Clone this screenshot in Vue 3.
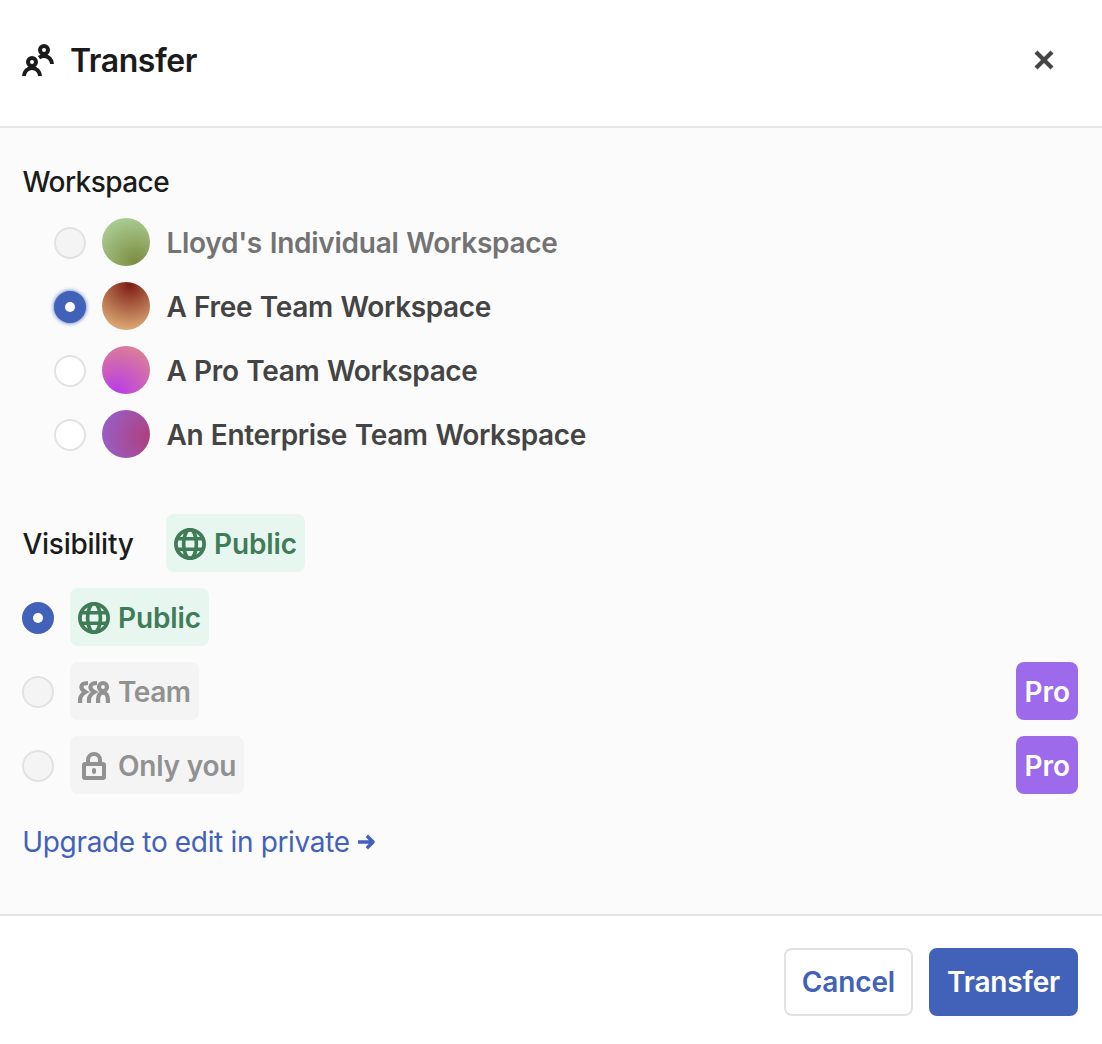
<script setup>
import { ref } from 'vue'

const workspaces = [
  { id: 'individual', name: "Lloyd's Individual Workspace", avatar: 'olive', disabled: true },
  { id: 'free', name: 'A Free Team Workspace', avatar: 'rust' },
  { id: 'pro', name: 'A Pro Team Workspace', avatar: 'pink' },
  { id: 'enterprise', name: 'An Enterprise Team Workspace', avatar: 'plum' },
]
const visibilities = [
  { id: 'public', name: 'Public' },
  { id: 'team', name: 'Team', pro: true },
  { id: 'private', name: 'Only you', pro: true },
]
const workspace = ref('free')
const visibility = ref('public')
</script>

<template>
  <div class="dialog">
    <header class="header">
      <svg class="icon" viewBox="0 0 32 32" fill="none" stroke="currentColor" stroke-width="4">
        <circle cx="10" cy="18" r="4" />
        <path d="M2 32a8 8 0 0 1 16 0" />
        <circle cx="22" cy="6" r="4" />
        <path d="M17 13.6c1.500-1 3.200-1.600 5-1.600a8 8 0 0 1 8 8" />
      </svg>
      <h1 class="title">Transfer</h1>
      <button class="close" aria-label="Close">
        <svg width="20" height="20" viewBox="0 0 20 20" fill="none" stroke="currentColor" stroke-width="4.200">
          <path d="M2 2l16 16M18 2L2 18" />
        </svg>
      </button>
    </header>

    <main class="body">
      <h2 class="label workspace-label">Workspace</h2>
      <ul class="workspaces">
        <li
          v-for="w in workspaces"
          :key="w.id"
          class="workspace"
          :class="{ muted: w.disabled }"
          @click="!w.disabled && (workspace = w.id)"
        >
          <span class="radio" :class="{ checked: workspace === w.id, focused: workspace === w.id, off: w.disabled }"></span>
          <span class="avatar" :class="w.avatar"></span>
          <span class="name">{{ w.name }}</span>
        </li>
      </ul>

      <div class="current">
        <h2 class="label vis-label">Visibility</h2>
        <span class="badge public">
          <svg class="icon" viewBox="0 0 32 32" fill="none" stroke="currentColor">
            <circle cx="16" cy="16" r="14.100" stroke-width="3.800" />
            <ellipse cx="16" cy="16" rx="6.400" ry="14.500" stroke-width="3.700" />
            <path d="M2 10.800h28M2 21.200h28" stroke-width="3.600" />
          </svg>
          <span>Public</span>
        </span>
      </div>

      <ul class="visibilities">
        <li v-for="v in visibilities" :key="v.id" class="visibility">
          <span class="radio" :class="{ checked: visibility === v.id, off: v.pro }"></span>
          <span class="badge" :class="v.id">
            <svg class="icon" viewBox="0 0 32 32" fill="none" stroke="currentColor">
              <template v-if="v.id === 'public'">
                <circle cx="16" cy="16" r="14.100" stroke-width="3.800" />
                <ellipse cx="16" cy="16" rx="6.400" ry="14.500" stroke-width="3.700" />
                <path d="M2 10.800h28M2 21.200h28" stroke-width="3.600" />
              </template>
              <g v-else-if="v.id === 'team'" stroke-width="4.200">
                <path d="M10 7C6 7 3.400 8.300 3.400 11C3.400 13.500 5 14.600 7.500 16C4 18 2.100 20 2.100 23.500V27" />
                <path d="M19 7C15 7 12.400 8.300 12.400 11C12.400 13.500 14 14.600 16.500 16C13 18 11 20 11 23.500V27" />
                <circle cx="25" cy="11" r="4" />
                <path d="M20.100 27v-3.500c0-4 2-6.800 4.900-6.800s4.900 2.800 4.900 6.800V27" />
              </g>
              <g v-else stroke-width="4">
                <rect x="6" y="14" width="20" height="14" rx="1" />
                <path d="M10 14v-4a6 6 0 0 1 12 0v4" />
                <rect x="14" y="18" width="4" height="6" rx="2" fill="currentColor" stroke="none" />
              </g>
            </svg>
            <span>{{ v.name }}</span>
          </span>
          <span v-if="v.pro" class="badge plan"><span>Pro</span></span>
        </li>
      </ul>

      <a class="upgrade">
        <span>Upgrade to edit in private</span>
        <svg width="18" height="16" viewBox="0 0 18 16" fill="none" stroke="currentColor" stroke-width="3.400">
          <path d="M0 8h15M8.800 1.700l6.300 6.300l-6.300 6.300" stroke-linejoin="round" />
        </svg>
      </a>
    </main>

    <footer class="footer">
      <button class="btn cancel"><span>Cancel</span></button>
      <button class="btn primary"><span>Transfer</span></button>
    </footer>
  </div>
</template>

<style>
body {
  margin: 0;
  background: #fff;
}
</style>

<style scoped>
.dialog {
  box-sizing: border-box;
  width: 1102px;
  height: 1044px;
  display: flex;
  flex-direction: column;
  background: #fff;
  color: #1b1b1b;
  font-family: Inter, "Liberation Sans", sans-serif;
  font-size: 28px;
  line-height: 42px;
  white-space: nowrap;
}
.header {
  box-sizing: border-box;
  height: 128px;
  display: flex;
  align-items: center;
  padding: 0 46px 6px 22px;
  border-bottom: 2px solid #e5e5e5;
}
.icon {
  width: 32px;
  height: 32px;
  flex: none;
}
.title {
  margin: 2px 0 0 16px;
  font-size: 32px;
  font-weight: 600;
  letter-spacing: -0.45px;
}
button {
  font: inherit;
  padding: 0;
  border: 0;
  background: none;
}
.close {
  display: flex;
  margin-left: auto;
  padding: 2px;
  color: #444;
}
.body {
  box-sizing: border-box;
  height: 786px;
  padding: 33px 24px 0 22px;
  background: #fbfbfb;
}
.label {
  margin: 0;
  font-size: 28px;
  font-weight: 500;
}
.workspace-label {
  padding-left: 0.4px;
  letter-spacing: -0.55px;
}
ul {
  margin: 0;
  padding: 0;
  list-style: none;
}
.workspaces {
  display: flex;
  flex-direction: column;
  gap: 16px;
  padding: 15px 0 0 32px;
}
.workspace {
  height: 48px;
  display: flex;
  align-items: center;
  gap: 16px;
  color: #444;
  font-weight: 600;
  letter-spacing: -0.36px;
  word-spacing: 1px;
}
.workspace .radio {
  margin-top: 2px;
}
.workspace .name {
  margin: 2px 0 0 0.4px;
}
.workspace.muted {
  color: #737373;
  letter-spacing: -0.27px;
}
.radio {
  box-sizing: border-box;
  width: 32px;
  height: 32px;
  flex: none;
  display: flex;
  align-items: center;
  justify-content: center;
  border: 2px solid #e2e2e2;
  border-radius: 50%;
  background: #fff;
}
.radio.off {
  background: #f4f4f4;
}
.radio.checked {
  border-color: #4262ba;
  background: #4262ba;
}
.radio.checked::after {
  content: "";
  width: 10px;
  height: 10px;
  border-radius: 50%;
  background: #fff;
}
.radio.focused {
  box-shadow: 0 0 4px #4262ba;
}
.avatar {
  width: 48px;
  height: 48px;
  border-radius: 50%;
}
.olive {
  background: radial-gradient(circle at 70% 92%, #7c8c40, #afd49c 92%);
}
.rust {
  background: radial-gradient(circle at 58% 5%, #7d1d14, #dfae78 88%);
}
.pink {
  background: radial-gradient(circle at 32% 95%, #b83de6, #df8490 92%);
}
.plum {
  background: radial-gradient(circle at 98% 58%, #b03e7e, #9661c8 92%);
}
.current {
  display: flex;
  align-items: center;
  margin-top: 56px;
}
.vis-label {
  box-sizing: border-box;
  width: 144px;
  padding-left: 0.4px;
  margin-top: 2px;
  letter-spacing: -0.25px;
}
.badge {
  box-sizing: border-box;
  height: 58px;
  display: flex;
  align-items: center;
  gap: 8px;
  padding: 2px 8px 0;
  border-radius: 8px;
  background: #f4f4f4;
  color: #919191;
  font-weight: 600;
  letter-spacing: -0.22px;
}
.public {
  background: #e7f6ef;
  color: #407c58;
  letter-spacing: -0.12px;
}
.team {
  letter-spacing: -0.45px;
}
.plan {
  margin-left: auto;
  background: #9c6aea;
  color: #fff;
  letter-spacing: 0;
}
.visibilities {
  display: flex;
  flex-direction: column;
  gap: 16px;
  margin-top: 16px;
}
.visibility {
  display: flex;
  align-items: center;
}
.visibility .radio {
  margin: 2px 16px 0 0;
}
.upgrade {
  display: flex;
  align-items: center;
  gap: 8px;
  margin-top: 27px;
  padding-left: 0.3px;
  color: #4262ba;
  letter-spacing: -0.34px;
}
.footer {
  box-sizing: border-box;
  flex: 1;
  display: flex;
  align-items: flex-start;
  justify-content: flex-end;
  gap: 16px;
  padding: 32px 24px 0;
  border-top: 2px solid #e5e5e5;
}
.btn {
  box-sizing: border-box;
  height: 68px;
  padding: 0 16px;
  border: 2px solid #4262ba;
  border-radius: 8px;
  font-weight: 600;
  letter-spacing: -0.15px;
}
.cancel {
  border-color: #e2e2e2;
  background: #fff;
  color: #4262ba;
}
.primary {
  background: #4262ba;
  color: #fff;
}
</style>
